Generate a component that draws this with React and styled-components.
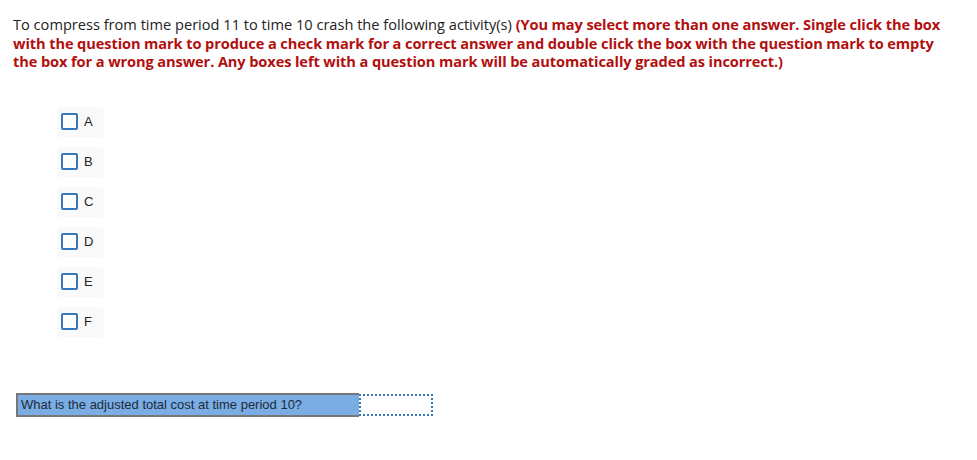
import React from 'react';
import styled, { createGlobalStyle } from 'styled-components';

const GlobalStyle = createGlobalStyle`
  html, body {
    margin: 0;
    padding: 0;
    background: #fff;
  }
`;

const Page = styled.div`
  width: 977px;
  height: 460px;
  padding: 15px 13px 0;
  box-sizing: border-box;
`;

const Prompt = styled.p`
  margin: 0;
  width: 935px;
  font-family: "Open Sans", "Liberation Sans", sans-serif;
  font-size: 14.6px;
  line-height: 18.5px;
  color: #222;
`;

const Instruction = styled.strong`
  color: #b20f0f;
  font-weight: 700;
  letter-spacing: -0.1px;
`;

const Options = styled.ul`
  list-style: none;
  margin: 36px 0 0 44px;
  padding: 0;
  display: flex;
  flex-direction: column;
  gap: 10px;
`;

const Option = styled.li`
  display: flex;
  align-items: center;
  gap: 6px;
  width: fit-content;
  min-width: 47px;
  height: 30px;
  padding: 0 8px 0 4px;
  box-sizing: border-box;
  background: #f9f9f9;
  border-radius: 3px;
  font-family: "Liberation Sans", Arial, sans-serif;
  font-size: 13px;
  color: #222;
`;

const Box = styled.span`
  width: 17px;
  height: 17px;
  box-sizing: border-box;
  border: 2.5px solid #3a76ba;
  border-radius: 2px;
  background: #fff;
`;

const Question = styled.div`
  display: flex;
  margin: 56px 0 0 3px;
  width: 417px;
  height: 24px;
`;

const Label = styled.div`
  flex: 0 0 343px;
  box-sizing: border-box;
  background: #7aade4;
  border: 2px solid #777;
  border-right: none;
  display: flex;
  align-items: center;
  padding-left: 3px;
  font-family: "Liberation Sans", Arial, sans-serif;
  font-size: 13px;
  color: #1e2a3a;
`;

const Answer = styled.input`
  flex: 1;
  min-width: 0;
  box-sizing: border-box;
  border: 2px dotted #3a76ba;
  margin: 1px 0;
  background: #fff;
  outline: none;
`;

export default function App() {
  const letters = ['A', 'B', 'C', 'D', 'E', 'F'];
  return (
    <Page>
      <GlobalStyle />
      <Prompt>
        To compress from time period 11 to time 10 crash the following activity(s){' '}
        <Instruction>
          (You may select more than one answer. Single click the box with the question mark
          to produce a check mark for a correct answer and double click the box with the
          question mark to empty the box for a wrong answer. Any boxes left with a question
          mark will be automatically graded as incorrect.)
        </Instruction>
      </Prompt>
      <Options>
        {letters.map(l => (
          <Option key={l}>
            <Box />
            {l}
          </Option>
        ))}
      </Options>
      <Question>
        <Label>What is the adjusted total cost at time period 10?</Label>
        <Answer type="text" />
      </Question>
    </Page>
  );
}
